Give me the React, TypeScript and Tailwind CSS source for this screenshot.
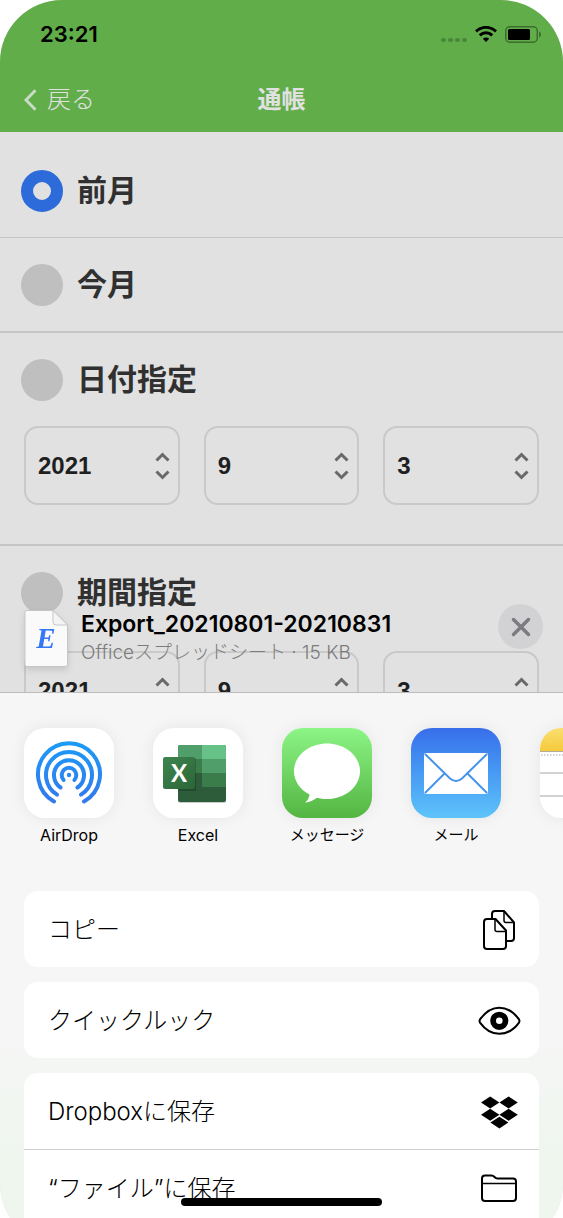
import { useState } from "react";
import type { ReactNode } from "react";

type iSelectValue = {
    label: string;
    value: string;
};

const dateValues: iSelectValue[] = [
    { label: "年", value: "2021" },
    { label: "月", value: "9" },
    { label: "日", value: "3" },
];

const StatusBar = () => {
    return (
        <div className="flex h-[68px] items-center justify-between pl-10 pr-[22px]">
            <span className="text-[22px] font-semibold leading-7 text-black">23:21</span>
            <div className="flex items-center gap-2">
                <svg width="26" height="18" viewBox="0 0 26 18" aria-hidden="true" fill="#4a8639">
                    <rect x="0" y="13" width="5" height="4" rx="2" />
                    <rect x="7" y="13" width="5" height="4" rx="2" />
                    <rect x="14" y="13" width="5" height="4" rx="2" />
                    <rect x="21" y="13" width="5" height="4" rx="2" />
                </svg>
                <svg width="22" height="16" viewBox="0 0 22 16" aria-hidden="true" fill="none" stroke="#000" strokeWidth="3">
                    <path d="M1 5.4a14.4 14.4 0 0 1 20 0" />
                    <path d="M4.8 9.3a9 9 0 0 1 12.4 0" />
                    <path d="M11 16l-3.2-3.3a4.6 4.6 0 0 1 6.4 0z" fill="#000" stroke="none" />
                </svg>
                <svg width="36" height="17" viewBox="0 0 36 17" aria-hidden="true">
                    <rect x="0.75" y="0.75" width="31.5" height="15.5" rx="4" fill="none" stroke="#3c6c2e" strokeWidth="1.5" />
                    <rect x="3" y="3" width="22" height="11" rx="1.5" fill="#000" />
                    <path d="M34 5.5c1.4.5 2 1.6 2 3s-.6 2.5-2 3z" fill="#3c6c2e" />
                </svg>
            </div>
        </div>
    );
};

const NavBar = () => {
    return (
        <div className="grid h-16 grid-cols-3 items-center px-6">
            <button type="button" className="flex items-center gap-2.5 text-2xl font-light text-[#e1e1e1]">
                <svg width="13" height="22" viewBox="0 0 13 22" aria-hidden="true" fill="none" stroke="#c9dcc3" strokeWidth="3">
                    <path d="M11.5 1.2L2 11l9.5 9.8" />
                </svg>
                戻る
            </button>
            <h1 className="text-center text-2xl font-bold text-[#e1e1e1]">通帳</h1>
        </div>
    );
};

type iRadioRowProps = {
    label: string;
    value: string;
    selected: string;
    onSelect: (value: string) => void;
};

const RadioRow = ({ label, value, selected, onSelect }: iRadioRowProps) => {
    return (
        <label className="flex h-[93px] items-center gap-3.5 px-[21px] text-3xl font-bold text-[#303030]">
            <input
                type="radio"
                name="period"
                value={value}
                checked={selected === value}
                onChange={() => onSelect(value)}
                className="size-[42px] shrink-0 appearance-none rounded-full bg-[#bfbfbf] checked:border-[12px] checked:border-[#2d6bda] checked:bg-[#e1e1e1]"
            />
            <span className="pb-0.5">{label}</span>
        </label>
    );
};

const DateSelects = ({ name }: { name: string }) => {
    return (
        <div className="grid grid-cols-3 gap-6 px-6">
            {dateValues.map((item) => (
                <div key={item.label} className="relative">
                    <select
                        aria-label={`${name} ${item.label}`}
                        className="block h-[79px] w-full appearance-none rounded-[14px] border-2 border-[#c9c9c9] bg-transparent pl-3 text-2xl font-bold text-[#1f1f1f] [font-family:'Liberation_Sans',sans-serif]"
                    >
                        <option>{item.value}</option>
                    </select>
                    <svg
                        className="pointer-events-none absolute inset-y-0 right-2.5 my-auto"
                        width="15"
                        height="28"
                        viewBox="0 0 15 28"
                        aria-hidden="true"
                        fill="none"
                        stroke="#696969"
                        strokeWidth="3"
                    >
                        <path d="M1.5 8.5l6-6 6 6M1.5 19.5l6 6 6-6" />
                    </svg>
                </div>
            ))}
        </div>
    );
};

const FileIcon = () => {
    return (
        <svg width="45" height="58" viewBox="0 0 45 58" className="shrink-0 drop-shadow-md" aria-hidden="true">
            <path d="M3 .5h26L43.5 15v39.5a2 2 0 0 1-2 2H3a2 2 0 0 1-2-2v-52a2 2 0 0 1 2-2z" fill="#fafafa" stroke="#c6c6c6" />
            <path d="M29 .5V12a3 3 0 0 0 3 3h11.5z" fill="#f4f4f4" stroke="#c6c6c6" />
            <text x="22" y="38" textAnchor="middle" fontFamily="Liberation Serif, serif" fontSize="29" fontWeight="bold" fontStyle="italic" fill="#3478f6">
                E
            </text>
        </svg>
    );
};

const AirDropIcon = () => {
    return (
        <svg viewBox="0 0 90 90" className="size-full" aria-hidden="true">
            <defs>
                <linearGradient id="airdrop" gradientUnits="userSpaceOnUse" x1="45" y1="14" x2="45" y2="76">
                    <stop offset="0" stopColor="#1b9bf7" />
                    <stop offset="1" stopColor="#3478ec" />
                </linearGradient>
            </defs>
            <g fill="none" stroke="url(#airdrop)" strokeWidth="4" strokeLinecap="round">
                <path d="M30 73.5A31 31 0 1 1 60 73.5" />
                <path d="M33 66.6A23 23 0 1 1 57 66.6" />
                <path d="M36.5 59.5A15 15 0 1 1 53.5 59.5" />
                <path d="M39.6 52A7.3 7.3 0 1 1 50.4 52" />
            </g>
            <circle cx="45" cy="47" r="2.2" fill="#2a8af2" />
        </svg>
    );
};

const ExcelIcon = () => {
    return (
        <svg viewBox="0 0 90 90" className="size-full" aria-hidden="true">
            <defs>
                <clipPath id="excelSheet">
                    <rect x="25" y="17" width="48" height="57" rx="2" />
                </clipPath>
                <linearGradient id="excelBadge" x1="0" y1="0" x2="1" y2="1">
                    <stop offset="0" stopColor="#3f8650" />
                    <stop offset="1" stopColor="#2b6636" />
                </linearGradient>
            </defs>
            <rect x="25" y="18" width="48" height="57" rx="2" fill="#000" opacity="0.2" />
            <g clipPath="url(#excelSheet)">
                <rect x="25" y="17" width="48" height="57" fill="#2d5c3b" />
                <rect x="25" y="17" width="24" height="14" fill="#509f6b" />
                <rect x="25" y="31" width="24" height="14" fill="#3b7c4b" />
                <rect x="49" y="17" width="24" height="14" fill="#67c288" />
                <rect x="49" y="31" width="24" height="14" fill="#509f6b" />
                <rect x="49" y="45" width="24" height="14" fill="#3b7c4b" />
                <rect x="25" y="30" width="18" height="33" fill="#000" opacity="0.18" />
            </g>
            <rect x="10" y="29" width="32" height="32" rx="2" fill="url(#excelBadge)" />
            <text x="26" y="54" textAnchor="middle" fontFamily="Lato, sans-serif" fontSize="24" fontWeight="bold" fill="#fff">
                X
            </text>
        </svg>
    );
};

const MessagesIcon = () => {
    return (
        <svg viewBox="0 0 90 90" className="size-full" aria-hidden="true">
            <path
                d="M45 15.5c18.2 0 33 12.4 33 27.7S63.2 71 45 71c-3.6 0-7-.4-10.2-1.3-3 2.3-7.3 4.5-11.8 5 2.5-2.3 4.3-5 4.5-8.2C18 61.5 12 53 12 43.2c0-15.3 14.8-27.7 33-27.7z"
                fill="#fff"
            />
        </svg>
    );
};

const MailIcon = () => {
    return (
        <svg viewBox="0 0 90 90" className="size-full" aria-hidden="true">
            <rect x="13" y="25" width="64" height="41" rx="2" fill="#fff" />
            <g fill="none" stroke="#4593ec" strokeWidth="2">
                <path d="M14 26l25 24.5q6 5 12 0L76 26" />
                <path d="M33.5 45.5L14 65M56.5 45.5L76 65" />
            </g>
        </svg>
    );
};

const NotesIcon = () => {
    return (
        <svg viewBox="0 0 90 90" className="size-full" aria-hidden="true">
            <defs>
                <linearGradient id="notes" x1="0" y1="0" x2="0" y2="1">
                    <stop offset="0" stopColor="#f9de70" />
                    <stop offset="1" stopColor="#f5cb3d" />
                </linearGradient>
            </defs>
            <rect width="90" height="23" fill="url(#notes)" />
            <path d="M0 23.5h90" stroke="#b3ab9b" />
            <path d="M1 27h89" stroke="#c4c4c8" strokeWidth="1.5" strokeDasharray="1.5 1.5" />
            <path d="M0 45h90M0 68h90" stroke="#c4c4c8" strokeWidth="1.5" />
        </svg>
    );
};

const CopyIcon = () => {
    return (
        <svg width="44" height="44" viewBox="0 0 44 44" aria-hidden="true" fill="none" stroke="#000" strokeWidth="2" strokeLinejoin="round">
            <path d="M15 11V7a3 3 0 0 1 3-3h9l10 11.5V31a3 3 0 0 1-3 3h-4" />
            <path d="M27 4v9.5a2 2 0 0 0 2 2h8" strokeWidth="1.5" />
            <path d="M10 12h8.5L29 23.5V39a3 3 0 0 1-3 3H10a3 3 0 0 1-3-3V15a3 3 0 0 1 3-3z" />
            <path d="M18 12v10.5a2 2 0 0 0 2 2h9" strokeWidth="1.5" />
        </svg>
    );
};

const EyeIcon = () => {
    return (
        <svg width="44" height="44" viewBox="0 0 44 44" aria-hidden="true" fill="none" stroke="#000">
            <path
                d="M3 21.4C8 14.5 14.5 9.7 22.3 9.7S37 14.5 42 21.4q.9 1.6 0 3.2C37 31.500 30 35.800 22.300 35.800S8 31.500 3 24.600q-.9-1.600 0-3.200z"
                strokeWidth="2"
                strokeLinejoin="round"
            />
            <circle cx="22.3" cy="22.8" r="6.2" strokeWidth="5.8" />
        </svg>
    );
};

const DropboxIcon = () => {
    return (
        <svg width="44" height="44" viewBox="0 0 44 44" aria-hidden="true" fill="#000">
            <path d="M4 13.5l9.2-6 9.2 6-9.2 6z" />
            <path d="M22.4 13.5l9.2-6 9.2 6-9.2 6z" />
            <path d="M4 25.8l9.2-6 9.2 6-9.2 6z" />
            <path d="M22.4 25.8l9.2-6 9.2 6-9.2 6z" />
            <path d="M13.4 33.6l9-5.8 9 5.8-9 5.9z" />
        </svg>
    );
};

const FolderIcon = () => {
    return (
        <svg width="44" height="44" viewBox="0 0 44 44" aria-hidden="true" fill="none" stroke="#000" strokeWidth="2" strokeLinejoin="round">
            <path d="M5 12.5a3 3 0 0 1 3-3h6.5c1.5 0 2 .4 3 1.5s1.5 1.5 3 1.5H36a3 3 0 0 1 3 3V32a3 3 0 0 1-3 3H8a3 3 0 0 1-3-3z" />
            <path d="M5 17.5h34" strokeWidth="1.5" />
        </svg>
    );
};

const apps = [
    { name: "AirDrop", text: "text-base", tile: "bg-white", icon: <AirDropIcon /> },
    { name: "Excel", text: "text-base", tile: "bg-white", icon: <ExcelIcon /> },
    { name: "メッセージ", text: "text-[15px]", tile: "bg-linear-to-b from-[#8cf585] to-[#54b541]", icon: <MessagesIcon /> },
    { name: "メール", text: "text-[15px]", tile: "bg-linear-to-b from-[#386eea] to-[#5ec4fa]", icon: <MailIcon /> },
];

const tileClass = "block size-[90px] overflow-hidden rounded-[21px] shadow-[0_0_16px_rgba(0,0,0,0.07)]";

const ActionButton = ({ label, icon }: { label: string; icon: ReactNode }) => {
    return (
        <button type="button" className="flex w-full items-center justify-between py-4 pl-6 pr-[18px] text-2xl font-light text-black">
            <span className="pt-0.5">{label}</span>
            {icon}
        </button>
    );
};

const ShareSheet = ({ onClose }: { onClose: () => void }) => {
    return (
        <section className="absolute inset-x-0 bottom-0" aria-label="共有">
            {/* File header */}
            <div className="flex items-start px-5 pb-6">
                <div className="flex min-w-0 flex-1 items-start gap-3 pl-1">
                    <FileIcon />
                    <div className="min-w-0">
                        <p className="text-[23px] font-semibold leading-7 text-black">Export_20210801-20210831</p>
                        <p className="text-[19px] font-light leading-[30px] text-[#7c7c7c]">Officeスプレッドシート · 15 KB</p>
                    </div>
                </div>
                <button
                    type="button"
                    aria-label="閉じる"
                    onClick={onClose}
                    className="-mt-1.5 flex size-[45px] items-center justify-center rounded-full bg-[#d2d2d4]"
                >
                    <svg width="20" height="20" viewBox="0 0 20 20" aria-hidden="true" stroke="#7c7c80" strokeWidth="3.5" strokeLinecap="round">
                        <path d="M2.5 2.5l15 15M17.5 2.5l-15 15" />
                    </svg>
                </button>
            </div>

            <div className="border-t border-[#bcbcbc] bg-linear-to-b from-[#f6f6f6] from-60% to-[#eff6ee] to-85%">
                {/* Apps */}
                <div className="flex gap-[39px] overflow-hidden px-6 pb-[45px] pt-[35px]">
                    {apps.map((app) => (
                        <button key={app.name} type="button" className="flex w-[90px] shrink-0 flex-col items-center gap-1.5 text-black">
                            <span className={`${tileClass} ${app.tile}`}>{app.icon}</span>
                            <span className={`whitespace-nowrap leading-[22px] ${app.text}`}>{app.name}</span>
                        </button>
                    ))}
                    <button type="button" aria-label="メモ" className="w-[90px] shrink-0 self-start">
                        <span className={`${tileClass} bg-white`}>
                            <NotesIcon />
                        </span>
                    </button>
                </div>

                {/* Actions */}
                <div className="flex flex-col gap-[15px] px-6">
                    <div className="rounded-[14px] bg-white">
                        <ActionButton label="コピー" icon={<CopyIcon />} />
                    </div>
                    <div className="rounded-[14px] bg-white">
                        <ActionButton label="クイックルック" icon={<EyeIcon />} />
                    </div>
                    <div className="divide-y divide-[#d0d0d0] rounded-t-[14px] bg-white pb-5">
                        <ActionButton label="Dropboxに保存" icon={<DropboxIcon />} />
                        <ActionButton label="“ファイル”に保存" icon={<FolderIcon />} />
                    </div>
                </div>
            </div>
        </section>
    );
};

const App = () => {
    const [selected, setSelected] = useState("last");
    const [isSheetOpen, setSheetOpen] = useState(true);

    return (
        <div className="relative h-screen overflow-hidden bg-white [font-family:Inter,'Noto_Sans_CJK_JP',sans-serif]">
            <div className="relative h-[calc(100vh+28px)] overflow-hidden rounded-[62px] bg-[#e1e1e1]">
                <header className="bg-[#61ad49]">
                    <StatusBar />
                    <NavBar />
                </header>

                <main>
                    <div className="border-b border-[#c5c5c5] pt-3">
                        <RadioRow label="前月" value="last" selected={selected} onSelect={setSelected} />
                    </div>
                    <div className="border-b-2 border-[#c5c5c5]">
                        <RadioRow label="今月" value="current" selected={selected} onSelect={setSelected} />
                    </div>
                    <div className="border-b-2 border-[#c5c5c5] pb-[39px]">
                        <RadioRow label="日付指定" value="date" selected={selected} onSelect={setSelected} />
                        <DateSelects name="日付" />
                    </div>
                    <div className="pb-[39px]">
                        <RadioRow label="期間指定" value="range" selected={selected} onSelect={setSelected} />
                        <div className="pt-3">
                            <DateSelects name="期間" />
                        </div>
                    </div>
                </main>

                {isSheetOpen && <ShareSheet onClose={() => setSheetOpen(false)} />}
            </div>

            {/* Home indicator */}
            <div className="absolute inset-x-0 bottom-3 mx-auto h-2 w-[201px] rounded-full bg-black" />
        </div>
    );
};

export default App;
